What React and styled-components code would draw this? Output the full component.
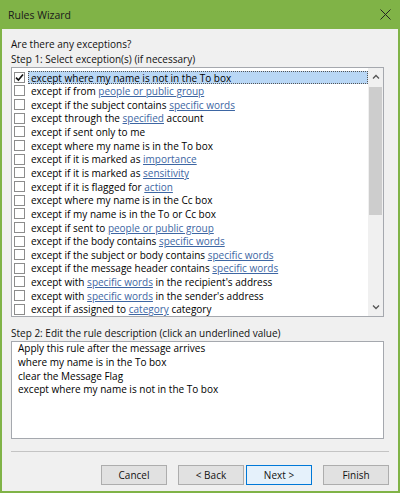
import React from 'react';
import styled, { createGlobalStyle } from 'styled-components';

const Global = createGlobalStyle`
  html, body { margin: 0; padding: 0; background: #f0f0f0; }
  * { box-sizing: border-box; }
`;

const Window = styled.div`
  width: 400px;
  height: 493px;
  display: flex;
  flex-direction: column;
  border: 2px solid #80b347;
  border-top: none;
  background: #f0f0f0;
  font-family: "Open Sans", "Noto Sans", sans-serif;
  color: #111;
`;

const TitleBar = styled.div`
  height: 29px;
  margin: 0 -2px;
  background: #80b347;
  display: flex;
  align-items: center;
  justify-content: space-between;
  padding: 0 9px 0 8px;
  font-size: 10.5px;
  color: #1a1a1a;
`;

const Body = styled.div`
  flex: 1;
  display: flex;
  flex-direction: column;
  padding: 7px 14px 0 9px;
`;

const Label = styled.div`
  font-size: 10px;
  line-height: 14px;
  height: 14px;
  margin-top: ${p => p.$mt || 0}px;
  white-space: nowrap;
`;

const ListBox = styled.div`
  height: 250px;
  margin-top: 1px;
  border: 1px solid #a5a8ae;
  background: #fff;
  display: flex;
`;

const Items = styled.div`
  flex: 1;
  padding-top: 2.5px;
  padding-left: 2px;
  overflow: hidden;
`;

const Row = styled.div`
  height: 13.65px;
  display: flex;
  align-items: center;
  font-size: 10px;
  white-space: nowrap;
  color: #000;
`;

const Box = styled.span`
  width: 11px;
  height: 11px;
  flex: none;
  border: 1px solid #8c8c8c;
  background: #fff;
  display: flex;
  align-items: center;
  justify-content: center;
`;

const RowText = styled.span`
  flex: 1;
  margin-left: 3px;
  padding: 0 2px;
  height: 13.65px;
  line-height: 12px;
  background: ${p => (p.$selected ? '#b9d7f5' : 'transparent')};
  border: 1px ${p => (p.$selected ? 'dotted #555' : 'solid transparent')};
`;

const Link = styled.span`
  color: #3d66a3;
  text-decoration: underline;
  text-underline-offset: 1px;
`;

const Scrollbar = styled.div`
  width: 15px;
  flex: none;
  background: #f0f0f0;
  display: flex;
  flex-direction: column;
  align-items: stretch;
`;

const Arrow = styled.div`
  height: 17px;
  display: flex;
  align-items: center;
  justify-content: center;
`;

const Thumb = styled.div`
  height: 128px;
  margin: 2px 1px 0;
  background: #cdcdcd;
`;

const Track = styled.div`
  flex: 1;
`;

const DescBox = styled.div`
  height: 98px;
  margin-top: 1px;
  border: 1px solid #a5a8ae;
  background: #fff;
  padding: 0 6px;
  font-size: 10px;
  line-height: 13.75px;
  color: #000;
`;

const Separator = styled.div`
  height: 1px;
  margin: 12px -5px 0 0;
  background: #c4c4c4;
`;

const Buttons = styled.div`
  display: flex;
  justify-content: flex-end;
  margin: 13px -5px 0 0;
  gap: 11px;
`;

const Pair = styled.div`
  display: flex;
  gap: 2px;
`;

const Button = styled.button`
  width: 66px;
  height: 20px;
  padding: 0;
  font-family: inherit;
  font-size: 10px;
  color: #111;
  background: ${p => (p.$default ? '#e5f1fb' : '#e1e1e1')};
  border: 1px solid ${p => (p.$default ? '#0078d7' : '#adadad')};
`;

const rules = [
  ['except where my name is not in the To box'],
  ['except if from ', { l: 'people or public group' }],
  ['except if the subject contains ', { l: 'specific words' }],
  ['except through the ', { l: 'specified' }, ' account'],
  ['except if sent only to me'],
  ['except where my name is in the To box'],
  ['except if it is marked as ', { l: 'importance' }],
  ['except if it is marked as ', { l: 'sensitivity' }],
  ['except if it is flagged for ', { l: 'action' }],
  ['except where my name is in the Cc box'],
  ['except if my name is in the To or Cc box'],
  ['except if sent to ', { l: 'people or public group' }],
  ['except if the body contains ', { l: 'specific words' }],
  ['except if the subject or body contains ', { l: 'specific words' }],
  ['except if the message header contains ', { l: 'specific words' }],
  ['except with ', { l: 'specific words' }, " in the recipient's address"],
  ['except with ', { l: 'specific words' }, " in the sender's address"],
  ['except if assigned to ', { l: 'category' }, ' category'],
];

const Check = () => (
  <svg width="9" height="9" viewBox="0 0 9 9">
    <path d="M1 4.6 L3.4 7 L8 1.5" fill="none" stroke="#111" strokeWidth="1.6" />
  </svg>
);

const Chevron = ({ up }) => (
  <svg width="8" height="5" viewBox="0 0 8 5">
    <path d={up ? 'M1 4.5 L4 1.5 L7 4.5' : 'M1 0.5 L4 3.5 L7 0.5'} fill="none" stroke="#555" strokeWidth="1.3" />
  </svg>
);

const App = () => (
  <>
    <Global />
    <Window>
      <TitleBar>
        <span>Rules Wizard</span>
        <svg width="11" height="11" viewBox="0 0 11 11">
          <path d="M0.5 0.5 L10.5 10.5 M10.5 0.5 L0.5 10.5" stroke="#222" strokeWidth="1" />
        </svg>
      </TitleBar>
      <Body>
        <Label $mt={1}>Are there any exceptions?</Label>
        <Label $mt={1}>Step 1: Select exception(s) (if necessary)</Label>
        <ListBox>
          <Items>
            {rules.map((parts, i) => (
              <Row key={i}>
                <Box>{i === 0 && <Check />}</Box>
                <RowText $selected={i === 0}>
                  {parts.map((p, j) => (typeof p === 'string' ? p : <Link key={j}>{p.l}</Link>))}
                </RowText>
              </Row>
            ))}
          </Items>
          <Scrollbar>
            <Arrow><Chevron up /></Arrow>
            <Thumb />
            <Track />
            <Arrow><Chevron /></Arrow>
          </Scrollbar>
        </ListBox>
        <Label $mt={9}>Step 2: Edit the rule description (click an underlined value)</Label>
        <DescBox>
          <div>Apply this rule after the message arrives</div>
          <div>where my name is in the To box</div>
          <div>clear the Message Flag</div>
          <div>except where my name is not in the To box</div>
        </DescBox>
        <Separator />
        <Buttons>
          <Button>Cancel</Button>
          <Pair>
            <Button>&lt; Back</Button>
            <Button $default>Next &gt;</Button>
          </Pair>
          <Button>Finish</Button>
        </Buttons>
      </Body>
    </Window>
  </>
);

export default App;
